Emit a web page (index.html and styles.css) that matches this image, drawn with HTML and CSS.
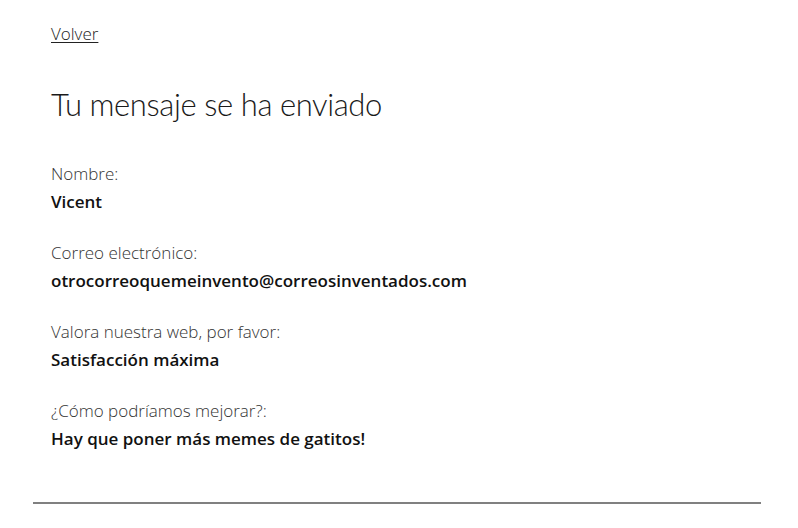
FILE: index.html
```html
<!DOCTYPE html>
<html lang="es">
<head>
<meta charset="utf-8">
<title>Mensaje enviado</title>
<link rel="stylesheet" href="styles.css">
</head>
<body>
<main class="page">
  <section class="content">
    <a class="back" href="#">Volver</a>
    <h1 class="title">Tu mensaje se ha enviado</h1>
    <dl class="fields">
      <div class="field">
        <dt class="label">Nombre:</dt>
        <dd class="value">Vicent</dd>
      </div>
      <div class="field">
        <dt class="label">Correo electrónico:</dt>
        <dd class="value">otrocorreoquemeinvento@correosinventados.com</dd>
      </div>
      <div class="field">
        <dt class="label">Valora nuestra web, por favor:</dt>
        <dd class="value">Satisfacción máxima</dd>
      </div>
      <div class="field">
        <dt class="label">¿Cómo podríamos mejorar?:</dt>
        <dd class="value">Hay que poner más memes de gatitos!</dd>
      </div>
    </dl>
  </section>
  <hr class="rule">
</main>
</body>
</html>
```
FILE: styles.css
```css
html, body {
  margin: 0;
  padding: 0;
  background: #ffffff;
}
body {
  font-family: "Open Sans", "Noto Sans", sans-serif;
  color: #222;
}
.page {
  width: 728px;
  margin: 0 0 0 33px;
  padding-top: 24px;
}
.content {
  padding: 0 18px;
  display: flex;
  flex-direction: column;
  align-items: flex-start;
}
.back {
  font-size: 17px;
  line-height: 20px;
  font-weight: 300;
  color: #222;
  text-decoration: underline;
  text-underline-offset: 2px;
}
.title {
  margin: 40px 0 0;
  font-family: "Lato", "Open Sans", sans-serif;
  font-size: 31px;
  line-height: 40px;
  font-weight: 300;
  letter-spacing: -0.4px;
  color: #1a1a1a;
}
.fields {
  margin: 40px 0 0;
  display: flex;
  flex-direction: column;
  gap: 31px;
}
.field {
  display: flex;
  flex-direction: column;
  gap: 8px;
}
.label {
  font-size: 17px;
  line-height: 20px;
  font-weight: 300;
  color: #333;
}
.value {
  margin: 0;
  font-size: 17px;
  line-height: 20px;
  font-weight: 600;
  color: #111;
}
.rule {
  margin: 53px 0 0;
  border: 0;
  border-top: 2px solid #808080;
  height: 0;
}
```
